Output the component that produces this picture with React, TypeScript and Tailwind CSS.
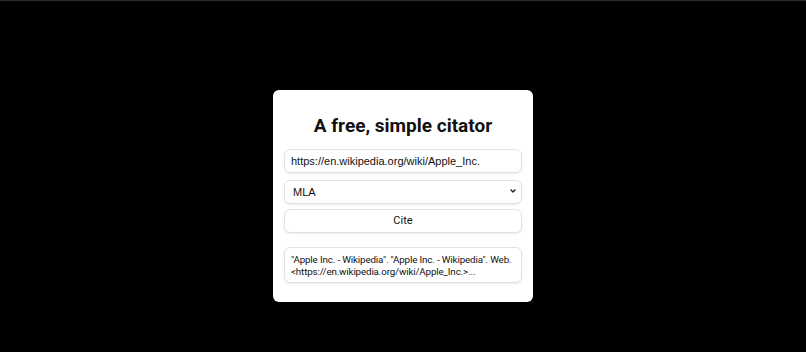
import { useState } from 'react';

export default function App() {
  const [url, setUrl] = useState('https://en.wikipedia.org/wiki/Apple_Inc.');
  const [style, setStyle] = useState('MLA');

  const field =
    'w-full h-[24px] rounded-[6px] border border-[#e2e2e2] bg-white px-[6px] text-[11px] text-[#111] shadow-[0_1px_2px_rgba(0,0,0,0.08)] outline-none';

  return (
    <div className="min-h-screen w-full bg-black border-t border-[#2a2a2a] flex justify-center pt-[89px] font-['Liberation_Sans',Arial,sans-serif]">
      <div className="w-[260px] h-[212px] bg-white rounded-[6px] px-[11px] pt-[23px] flex flex-col">
        <h1 className="text-center text-[19px] leading-[26px] font-bold text-[#111] font-['Roboto',sans-serif] mb-[10px]">
          A free, simple citator
        </h1>
        <div className="flex flex-col gap-[5.5px]">
          <input className={field} value={url} onChange={(e) => setUrl(e.target.value)} />
          <div className="relative">
            <select
              className={field + ' appearance-none px-[8px] text-[11.5px]'}
              value={style}
              onChange={(e) => setStyle(e.target.value)}
            >
              <option>MLA</option>
              <option>APA</option>
              <option>Chicago</option>
            </select>
            <svg
              className="absolute right-[6px] top-[10px] pointer-events-none"
              width="6"
              height="4"
              viewBox="0 0 6 4"
            >
              <path d="M0.6 0.6 L3 3 L5.4 0.6" fill="none" stroke="#222" strokeWidth="1.4" />
            </svg>
          </div>
          <button className={field + ' text-center font-[Roboto,sans-serif]'}>Cite</button>
        </div>
        <div className="mt-[14px] h-[36px] rounded-[6px] border border-[#e2e2e2] shadow-[0_1px_2px_rgba(0,0,0,0.08)] pl-[6px] pr-[4px] pt-[6px] text-[9.8px] tracking-[-0.15px] leading-[11.5px] text-[#111] font-['Roboto',sans-serif]">
          "Apple Inc. - Wikipedia". "Apple Inc. - Wikipedia". Web. &lt;https://en.wikipedia.org/wiki/Apple_Inc.&gt;...
        </div>
      </div>
    </div>
  );
}
